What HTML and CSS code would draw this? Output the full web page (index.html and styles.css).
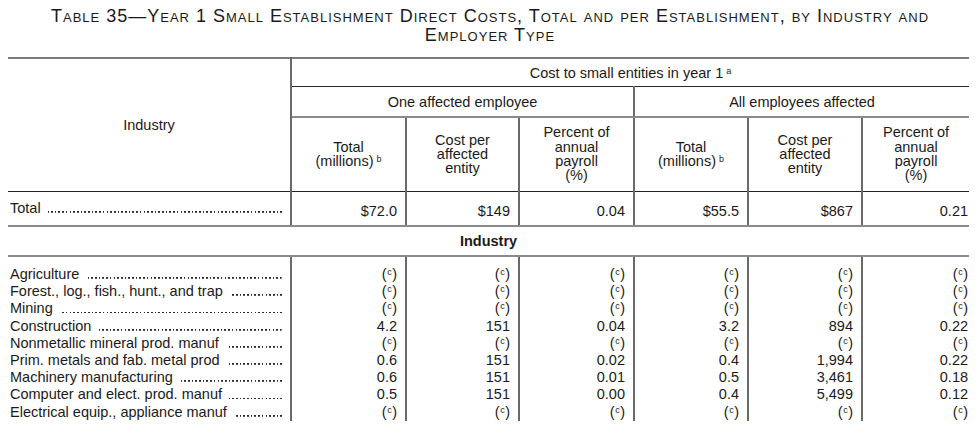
FILE: index.html
```html
<!DOCTYPE html>
<html lang="en">
<head>
<meta charset="utf-8">
<title>Table 35</title>
<link rel="stylesheet" href="styles.css">
</head>
<body>
<h1 class="title">Table 35—Year 1 Small Establishment Direct Costs, Total and per Establishment, by Industry and<br>Employer Type</h1>
<table class="tbl">
  <colgroup>
    <col class="c-ind">
    <col class="c-a"><col class="c-b"><col class="c-c">
    <col class="c-d"><col class="c-e"><col class="c-f">
  </colgroup>
  <thead>
    <tr class="h1">
      <th rowspan="3" class="ind-h">Industry</th>
      <th colspan="6" class="grp">Cost to small entities in year 1<sup class="fn">a</sup></th>
    </tr>
    <tr class="h2">
      <th colspan="3" class="sub">One affected employee</th>
      <th colspan="3" class="sub">All employees affected</th>
    </tr>
    <tr class="h3">
      <th class="col">Total<br>(millions)<sup class="fn">b</sup></th>
      <th class="col">Cost per<br>affected<br>entity</th>
      <th class="col">Percent of<br>annual<br>payroll<br>(%)</th>
      <th class="col">Total<br>(millions)<sup class="fn">b</sup></th>
      <th class="col">Cost per<br>affected<br>entity</th>
      <th class="col last">Percent of<br>annual<br>payroll<br>(%)</th>
    </tr>
  </thead>
  <tbody class="totals">
    <tr>
      <td class="lbl"><div class="leader"><span class="name">Total</span><span class="dots"></span></div></td>
      <td class="num">$72.0</td><td class="num">$149</td><td class="num">0.04</td>
      <td class="num">$55.5</td><td class="num">$867</td><td class="num last">0.21</td>
    </tr>
  </tbody>
  <tbody class="section">
    <tr><td colspan="7" class="sec">Industry</td></tr>
  </tbody>
  <tbody class="rows">
    <tr>
      <td class="lbl"><div class="leader"><span class="name">Agriculture</span><span class="dots"></span></div></td>
      <td class="num">(<sup class="c">c</sup>)</td><td class="num">(<sup class="c">c</sup>)</td><td class="num">(<sup class="c">c</sup>)</td>
      <td class="num">(<sup class="c">c</sup>)</td><td class="num">(<sup class="c">c</sup>)</td><td class="num last">(<sup class="c">c</sup>)</td>
    </tr>
    <tr>
      <td class="lbl"><div class="leader"><span class="name">Forest., log., fish., hunt., and trap</span><span class="dots"></span></div></td>
      <td class="num">(<sup class="c">c</sup>)</td><td class="num">(<sup class="c">c</sup>)</td><td class="num">(<sup class="c">c</sup>)</td>
      <td class="num">(<sup class="c">c</sup>)</td><td class="num">(<sup class="c">c</sup>)</td><td class="num last">(<sup class="c">c</sup>)</td>
    </tr>
    <tr>
      <td class="lbl"><div class="leader"><span class="name">Mining</span><span class="dots"></span></div></td>
      <td class="num">(<sup class="c">c</sup>)</td><td class="num">(<sup class="c">c</sup>)</td><td class="num">(<sup class="c">c</sup>)</td>
      <td class="num">(<sup class="c">c</sup>)</td><td class="num">(<sup class="c">c</sup>)</td><td class="num last">(<sup class="c">c</sup>)</td>
    </tr>
    <tr>
      <td class="lbl"><div class="leader"><span class="name">Construction</span><span class="dots"></span></div></td>
      <td class="num">4.2</td><td class="num">151</td><td class="num">0.04</td>
      <td class="num">3.2</td><td class="num">894</td><td class="num last">0.22</td>
    </tr>
    <tr>
      <td class="lbl"><div class="leader"><span class="name">Nonmetallic mineral prod. manuf</span><span class="dots"></span></div></td>
      <td class="num">(<sup class="c">c</sup>)</td><td class="num">(<sup class="c">c</sup>)</td><td class="num">(<sup class="c">c</sup>)</td>
      <td class="num">(<sup class="c">c</sup>)</td><td class="num">(<sup class="c">c</sup>)</td><td class="num last">(<sup class="c">c</sup>)</td>
    </tr>
    <tr>
      <td class="lbl"><div class="leader"><span class="name">Prim. metals and fab. metal prod</span><span class="dots"></span></div></td>
      <td class="num">0.6</td><td class="num">151</td><td class="num">0.02</td>
      <td class="num">0.4</td><td class="num">1,994</td><td class="num last">0.22</td>
    </tr>
    <tr>
      <td class="lbl"><div class="leader"><span class="name">Machinery manufacturing</span><span class="dots"></span></div></td>
      <td class="num">0.6</td><td class="num">151</td><td class="num">0.01</td>
      <td class="num">0.5</td><td class="num">3,461</td><td class="num last">0.18</td>
    </tr>
    <tr>
      <td class="lbl"><div class="leader"><span class="name">Computer and elect. prod. manuf</span><span class="dots"></span></div></td>
      <td class="num">0.5</td><td class="num">151</td><td class="num">0.00</td>
      <td class="num">0.4</td><td class="num">5,499</td><td class="num last">0.12</td>
    </tr>
    <tr>
      <td class="lbl"><div class="leader"><span class="name">Electrical equip., appliance manuf</span><span class="dots"></span></div></td>
      <td class="num">(<sup class="c">c</sup>)</td><td class="num">(<sup class="c">c</sup>)</td><td class="num">(<sup class="c">c</sup>)</td>
      <td class="num">(<sup class="c">c</sup>)</td><td class="num">(<sup class="c">c</sup>)</td><td class="num last">(<sup class="c">c</sup>)</td>
    </tr>
  </tbody>
</table>
</body>
</html>
```

FILE: styles.css
```css
html, body {
  margin: 0;
  padding: 0;
  background: #ffffff;
}

body {
  font-family: "Liberation Sans", Arial, Helvetica, sans-serif;
  color: #1a1a1a;
}

.title {
  margin: 7px 0 0;
  text-align: center;
  font-size: 18px;
  line-height: 19px;
  font-weight: normal;
  font-variant: small-caps;
  letter-spacing: 1px;
  white-space: nowrap;
  color: #1a1a1a;
}

.tbl {
  margin: 12px 0 0 8px;
  width: 961px;
  table-layout: fixed;
  border-collapse: collapse;
  font-size: 14.5px;
}

.c-ind { width: 283px; }
.c-a { width: 115px; }
.c-b { width: 113px; }
.c-c { width: 115px; }
.c-d { width: 114px; }
.c-e { width: 114px; }
.c-f { width: 107px; }

.tbl th {
  font-weight: normal;
  padding: 0;
  text-align: center;
  vertical-align: middle;
}

.h1 th {
  border-top: 2px solid #7a7a7a;
  height: 27px;
}

.ind-h {
  border-right: 2px solid #6a6a6a;
  border-bottom: 1px solid #222;
}

.grp {
  border-bottom: 1px solid #2a2a2a;
  line-height: 16px;
}

.h2 th {
  height: 29px;
  border-bottom: 2px solid #8a8a8a;
}

.h2 th:first-child {
  border-right: 2px solid #6a6a6a;
}

.h3 th {
  height: 72px;
  line-height: 14.3px;
  border-right: 2px solid #6a6a6a;
  border-bottom: 1px solid #222;
  padding-bottom: 1px;
}

.h3 th.last {
  border-right: none;
}

.fn {
  font-size: 9px;
  vertical-align: 4px;
  line-height: 0;
  margin-left: 3px;
}

.tbl td {
  padding: 0 8px 0 0;
  white-space: nowrap;
}

.tbl td.lbl {
  padding: 0 8px 0 2px;
  border-right: 2px solid #6a6a6a;
}

.tbl td.num {
  text-align: right;
  border-right: 2px solid #6a6a6a;
}

.tbl td.last {
  border-right: none;
  padding-right: 1px;
}

.leader {
  display: flex;
  align-items: baseline;
}

.name {
  flex: none;
}

.dots {
  flex: 1 1 auto;
  min-width: 0;
  height: 1.8px;
  margin-left: 7px;
  background-image: repeating-linear-gradient(to left, #2a2a2a 0, #2a2a2a 1.6px, transparent 1.6px, transparent 3.7px);
  background-position: right bottom;
  background-repeat: no-repeat;
}

.totals td {
  height: 27px;
  line-height: 17px;
  padding-top: 6px;
  border-bottom: 2px solid #8a8a8a;
}

.sec {
  text-align: center;
  font-weight: bold;
  height: 28px;
  border-bottom: 2px solid #8a8a8a;
  padding-right: 0 !important;
}

.rows td {
  line-height: 17.2px;
  height: 17.2px;
}

.rows tr:first-child td {
  padding-top: 9px;
}

.c {
  font-size: 9px;
  vertical-align: 4px;
  line-height: 0;
  margin: 0 0.5px;
}
```
